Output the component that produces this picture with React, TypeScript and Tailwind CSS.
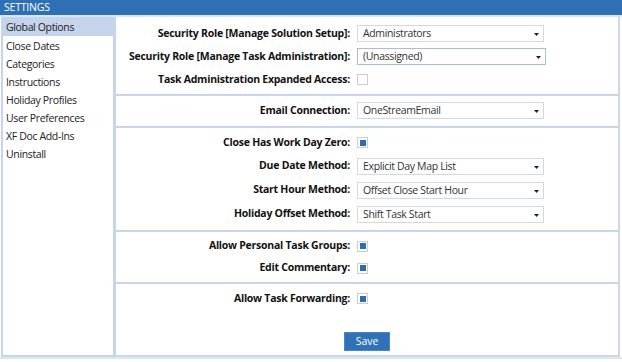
import React from "react";

const font = { fontFamily: '"Open Sans", "Noto Sans", sans-serif' };

function Arrow() {
  return (
    <svg width="5" height="3" viewBox="0 0 5 3" className="absolute right-[4px] top-[7px]">
      <path d="M0 0 H5 L2.5 3 Z" fill="#222" />
    </svg>
  );
}

function Select({ value, focused = false, wide = false }: { value: string; focused?: boolean; wide?: boolean }) {
  return (
    <div
      className={
        "relative h-[17px] border bg-white pl-[5px] text-[10.5px] leading-[15px] tracking-[-0.35px] text-[#333] " +
        (wide ? "w-[189px] " : "w-[187px] ") +
        (focused ? "border-[#a8bedc]" : "border-[#d3d9e2]")
      }
    >
      {value}
      <Arrow />
    </div>
  );
}

function Check({ checked }: { checked: boolean }) {
  return (
    <div className="flex h-[11px] w-[11px] items-center justify-center border border-[#c9ced6] bg-white">
      {checked && <div className="h-[6px] w-[6px] bg-[#2d6bb5]" />}
    </div>
  );
}

function Row({ label, h, children }: { label: string; h: string; children: React.ReactNode }) {
  return (
    <div className={"flex items-center " + h}>
      <div className="w-[234px] whitespace-nowrap text-right text-[10.5px] font-bold tracking-[-0.25px] text-[#111]">
        {label}
      </div>
      <div className="ml-[7px] flex items-center">{children}</div>
    </div>
  );
}

export default function App() {
  const menu = [
    "Global Options",
    "Close Dates",
    "Categories",
    "Instructions",
    "Holiday Profiles",
    "User Preferences",
    "XF Doc Add-Ins",
    "Uninstall",
  ];
  return (
    <div className="h-[362px] w-[622px] overflow-hidden bg-white" style={font}>
      <div className="h-[15px] bg-[#2f70b5] pl-[4px] text-[10.5px] leading-[15px] tracking-[-0.2px] text-white">SETTINGS</div>
      <div className="h-[2px] bg-[#dbe5f3]" />
      <div className="flex h-[342px] border-b-2 border-[#dde6f3]">
        <div className="ml-[1px] w-[115px] border-b-2 border-l-2 border-r-[3px] border-[#c6d4ec]">
          {menu.map((m, i) => (
            <div
              key={m}
              className={
                "h-[18px] pl-[3px] text-[10.5px] leading-[20px] tracking-[-0.35px] text-[#222] " +
                (i === 0 ? "h-[19px] bg-[#c5d3eb]" : "")
              }
            >
              {m}
            </div>
          ))}
        </div>
        <div className="mr-[2px] flex-1 border-b-2 border-r-2 border-[#cdd8ea]">
          <div className="border-b-2 border-[#c9d6ec] pb-[3px] pt-[5px]">
            <Row label="Security Role [Manage Solution Setup]:" h="h-[23px]">
              <Select value="Administrators" />
            </Row>
            <Row label="Security Role [Manage Task Administration]:" h="h-[23px]">
              <Select value="(Unassigned)" focused wide />
            </Row>
            <Row label="Task Administration Expanded Access:" h="h-[23px]">
              <Check checked={false} />
            </Row>
          </div>
          <div className="border-b-2 border-[#c9d6ec] pb-[4px] pt-[3px]">
            <Row label="Email Connection:" h="h-[23px]">
              <Select value="OneStreamEmail" />
            </Row>
          </div>
          <div className="border-b-2 border-[#c9d6ec] pb-[4px] pt-[3px]">
            <Row label="Close Has Work Day Zero:" h="h-[23px]">
              <Check checked />
            </Row>
            <Row label="Due Date Method:" h="h-[24px]">
              <Select value="Explicit Day Map List" />
            </Row>
            <Row label="Start Hour Method:" h="h-[24px]">
              <Select value="Offset Close Start Hour" />
            </Row>
            <Row label="Holiday Offset Method:" h="h-[24px]">
              <Select value="Shift Task Start" />
            </Row>
          </div>
          <div className="border-b-2 border-[#c9d6ec] pb-[3px] pt-[3px]">
            <Row label="Allow Personal Task Groups:" h="h-[22px]">
              <Check checked />
            </Row>
            <Row label="Edit Commentary:" h="h-[22px]">
              <Check checked />
            </Row>
          </div>
          <div className="pt-[3px]">
            <Row label="Allow Task Forwarding:" h="h-[23px]">
              <Check checked />
            </Row>
            <div className="mt-[22px] flex justify-center">
              <div className="h-[19px] w-[46px] border border-[#4a86c5] bg-[#2f72b7] text-center text-[10.5px] leading-[17px] text-white">
                Save
              </div>
            </div>
          </div>
        </div>
      </div>
    </div>
  );
}
